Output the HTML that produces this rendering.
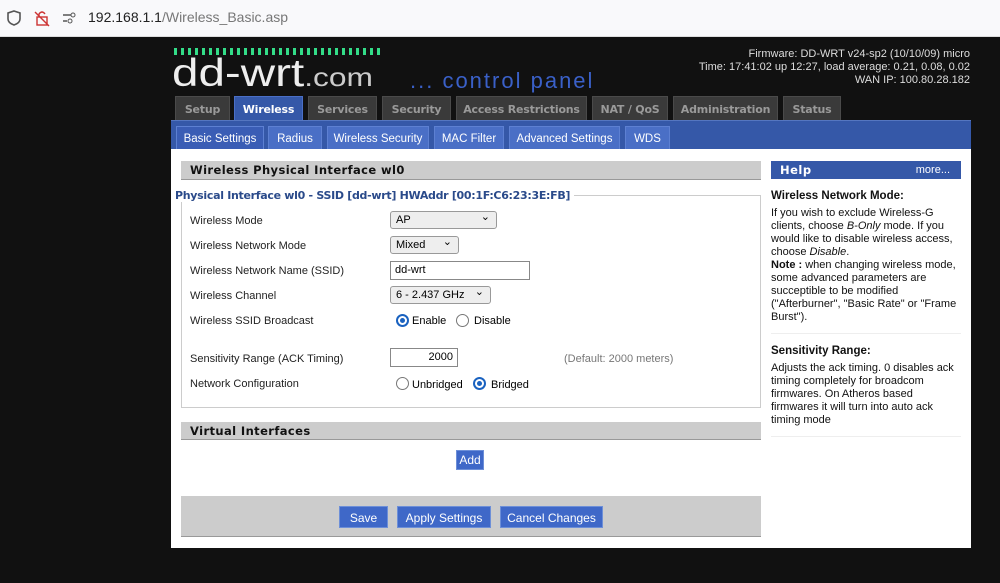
<!DOCTYPE html>
<html><head><meta charset="utf-8"><style>
*{margin:0;padding:0;box-sizing:border-box}
body{width:1000px;height:583px;background:#111;font-family:"Liberation Sans",sans-serif;font-size:11px;color:#000;position:relative;overflow:hidden}
.a{position:absolute;white-space:nowrap}
.bar{left:0;top:0;width:1000px;height:37px;background:#f9f9fb;border-bottom:1px solid #ddd}
.tt{top:96px;height:24px;background:#3a3a3a;color:#9a9a9a;font-weight:bold;font-size:11px;font-family:"DejaVu Sans",sans-serif;text-align:center;line-height:25px;border:1px solid #4a4a4a;border-bottom:none;letter-spacing:-.2px}
.st{top:126px;height:23px;background:#4a6fc6;color:#fff;font-size:11.5px;text-align:center;line-height:24px;border:1px solid #5d80d2;border-bottom:none}
.lbl{left:190px;font-size:11px;color:#222}
.sel{background:#eee;border:1px solid #999;border-radius:3px;height:18px;font-size:11px;line-height:16px;padding-left:5px}
.sel:after{content:"⌄";position:absolute;right:6px;top:-3px;font-size:11px}
.inp{background:#fff;border:1px solid #888;height:19px;font-size:11px;line-height:17px;padding:0 4px}
.rad{width:13px;height:13px;border-radius:50%;border:1px solid #777;background:#fff}
.rad.on{border:2px solid #1a62c0}
.rad.on:after{content:"";position:absolute;left:2px;top:2px;width:5px;height:5px;border-radius:50%;background:#1a62c0}
.btn{background:#3f68c8;color:#fff;font-size:12px;text-align:center;line-height:22px;height:22px;border:1px solid #6d8fd8}
.hd{background:#ccc;border-bottom:1px solid #999;font-weight:bold;font-size:11.5px;font-family:"DejaVu Sans",sans-serif;letter-spacing:.4px;padding-left:9px;line-height:18px;color:#111}
.help{left:771px;width:190px;font-size:11px;line-height:13px;color:#111;white-space:normal}
</style></head><body>
<div class="a bar"></div>
<svg class="a" style="left:6px;top:8px" width="70" height="20" viewBox="0 0 70 20">
<path d="M8 3 L14 5 L14 11 Q14 15 8 17 Q2 15 2 11 L2 5 Z" fill="none" stroke="#555" stroke-width="1.6"/>
<rect x="31" y="9" width="10" height="8" fill="none" stroke="#c33" stroke-width="1.4"/><path d="M33 9 V6 Q36 2 39 6" fill="none" stroke="#c33" stroke-width="1.4"/><path d="M29 4 L43 18" stroke="#c33" stroke-width="1.4"/>
<path d="M57 7 H65 M57 13 H61" stroke="#555" stroke-width="1.4"/><circle cx="67" cy="7" r="2" fill="none" stroke="#555"/><circle cx="64" cy="13" r="2" fill="none" stroke="#555"/>
</svg>
<div class="a" style="left:88px;top:9px;font-size:14px;font-family:'Liberation Sans',sans-serif;color:#222">192.168.1.1<span style="color:#777">/Wireless_Basic.asp</span></div>

<div class="a" style="left:174px;top:48px;width:210px;height:7px;background:repeating-linear-gradient(90deg,#3d8 0 3px,transparent 3px 7px)"></div>
<div class="a" style="left:172px;top:53px;font-family:'Liberation Sans',sans-serif;font-size:39px;color:#eee;line-height:42px;transform:scaleX(1.22);transform-origin:left top">dd-wrt<span style="font-size:26px;color:#ccc">.com</span></div>
<div class="a" style="left:410px;top:68px;font-family:'Liberation Sans',sans-serif;font-size:22px;color:#3a60c8;letter-spacing:2px">... control panel</div>
<div class="a" style="right:30px;top:48px;text-align:right;color:#ddd;font-size:11px;line-height:13px">Firmware: DD-WRT v24-sp2 (10/10/09) micro<br>Time: 17:41:02 up 12:27, load average: 0.21, 0.08, 0.02<br>WAN IP: 100.80.28.182</div>

<div class="a tt" style="left:175px;width:55px">Setup</div>
<div class="a tt" style="left:234px;width:69px;background:#3558a8;color:#fff;border-color:#4a6fc6;height:26px">Wireless</div>
<div class="a tt" style="left:308px;width:69px">Services</div>
<div class="a tt" style="left:382px;width:69px">Security</div>
<div class="a tt" style="left:456px;width:131px">Access Restrictions</div>
<div class="a tt" style="left:592px;width:76px">NAT / QoS</div>
<div class="a tt" style="left:673px;width:105px">Administration</div>
<div class="a tt" style="left:783px;width:58px">Status</div>

<div class="a" style="left:171px;top:120px;width:800px;height:29px;background:#3558a8;border-top:1px solid #5576c0"></div>
<div class="a st" style="left:176px;width:88px;background:#3a5db5">Basic Settings</div>
<div class="a st" style="left:268px;width:54px">Radius</div>
<div class="a st" style="left:327px;width:102px">Wireless Security</div>
<div class="a st" style="left:434px;width:70px">MAC Filter</div>
<div class="a st" style="left:509px;width:111px">Advanced Settings</div>
<div class="a st" style="left:625px;width:45px">WDS</div>

<div class="a" style="left:171px;top:149px;width:800px;height:399px;background:#fff"></div>
<div class="a hd" style="left:181px;top:161px;width:580px">Wireless Physical Interface wl0</div>
<div class="a" style="left:181px;top:195px;width:580px;height:213px;border:1px solid #ccc;border-top:none"></div>
<div class="a" style="left:540px;top:195px;width:221px;border-top:1px solid #ccc"></div>
<div class="a" style="left:175px;top:189px;font-weight:bold;color:#2a4a8a;font-size:11px;font-family:'DejaVu Sans',sans-serif;letter-spacing:-.3px;background:#fff;padding-right:4px">Physical Interface wl0 - SSID [dd-wrt] HWAddr [00:1F:C6:23:3E:FB]</div>

<div class="a lbl" style="top:215px">Wireless Mode</div>
<div class="a sel" style="left:390px;top:211px;width:107px">AP</div>
<div class="a lbl" style="top:240px">Wireless Network Mode</div>
<div class="a sel" style="left:390px;top:236px;width:69px">Mixed</div>
<div class="a lbl" style="top:265px">Wireless Network Name (SSID)</div>
<div class="a inp" style="left:390px;top:261px;width:140px">dd-wrt</div>
<div class="a lbl" style="top:290px">Wireless Channel</div>
<div class="a sel" style="left:390px;top:286px;width:101px">6 - 2.437 GHz</div>
<div class="a lbl" style="top:315px">Wireless SSID Broadcast</div>
<div class="a rad on" style="left:396px;top:314px"></div><div class="a" style="left:412px;top:315px">Enable</div>
<div class="a rad" style="left:456px;top:314px"></div><div class="a" style="left:474px;top:315px">Disable</div>

<div class="a lbl" style="top:353px">Sensitivity Range (ACK Timing)</div>
<div class="a inp" style="left:390px;top:348px;width:68px;text-align:right">2000</div>
<div class="a" style="left:564px;top:353px;color:#777">(Default: 2000 meters)</div>
<div class="a lbl" style="top:378px">Network Configuration</div>
<div class="a rad" style="left:396px;top:377px"></div><div class="a" style="left:412px;top:379px">Unbridged</div>
<div class="a rad on" style="left:473px;top:377px"></div><div class="a" style="left:491px;top:379px">Bridged</div>

<div class="a hd" style="left:181px;top:422px;width:580px;height:18px">Virtual Interfaces</div>
<div class="a btn" style="left:456px;top:450px;width:28px;height:20px;line-height:19px">Add</div>

<div class="a" style="left:181px;top:496px;width:580px;height:41px;background:#ccc;border-bottom:1px solid #999"></div>
<div class="a btn" style="left:339px;top:506px;width:49px">Save</div>
<div class="a btn" style="left:397px;top:506px;width:94px">Apply Settings</div>
<div class="a btn" style="left:500px;top:506px;width:103px">Cancel Changes</div>

<div class="a" style="left:771px;top:161px;width:190px;height:18px;background:#3558a8;color:#fff;font-weight:bold;font-size:11.5px;font-family:'DejaVu Sans',sans-serif;line-height:18px;padding-left:9px;letter-spacing:.5px">Help<span style="position:absolute;right:11px;font-weight:normal;font-size:11px;letter-spacing:0;font-family:'Liberation Sans',sans-serif">more...</span></div>
<div class="a help" style="top:190px"><b style="font-size:11.5px">Wireless Network Mode:</b></div>
<div class="a help" style="top:207px">If you wish to exclude Wireless-G clients, choose <i>B-Only</i> mode. If you would like to disable wireless access, choose <i>Disable</i>.<br><b>Note :</b> when changing wireless mode, some advanced parameters are succeptible to be modified ("Afterburner", "Basic Rate" or "Frame Burst").</div>
<div class="a" style="left:771px;top:333px;width:190px;border-top:1px solid #eee"></div>
<div class="a help" style="top:345px"><b style="font-size:11.5px">Sensitivity Range:</b></div>
<div class="a help" style="top:362px">Adjusts the ack timing. 0 disables ack timing completely for broadcom firmwares. On Atheros based firmwares it will turn into auto ack timing mode</div>
<div class="a" style="left:771px;top:436px;width:190px;border-top:1px solid #eee"></div>
</body></html>
